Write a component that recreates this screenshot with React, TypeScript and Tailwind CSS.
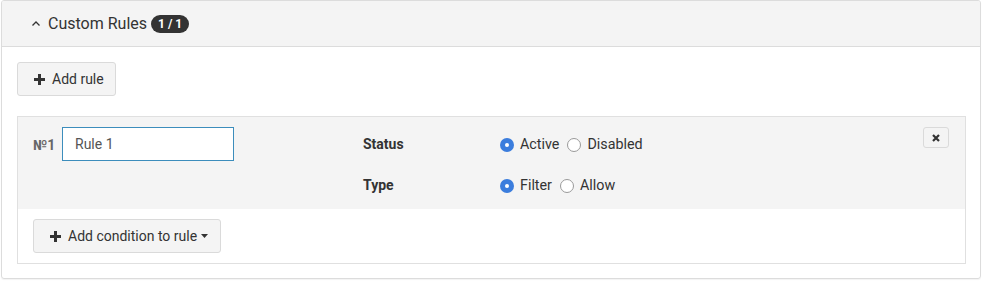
import React from "react";

function Radio({ checked, label }: { checked: boolean; label: string }) {
  return (
    <label className="flex items-center gap-[6px]">
      {checked ? (
        <span className="w-[14px] h-[14px] rounded-full bg-[#3b7ddd] flex items-center justify-center">
          <span className="w-[4px] h-[4px] rounded-full bg-white" />
        </span>
      ) : (
        <span className="w-[14px] h-[14px] rounded-full border border-[#9a9a9a] bg-white" />
      )}
      <span className="text-[14.3px] text-[#333]">{label}</span>
    </label>
  );
}

function Plus() {
  return (
    <svg width="11" height="11" viewBox="0 0 11 11">
      <path d="M4 0h3v4h4v3H7v4H4V7H0V4h4z" fill="#333" />
    </svg>
  );
}

export default function App() {
  return (
    <div className="w-[982px] h-[282px] bg-white" style={{ fontFamily: "Roboto, 'Liberation Sans', sans-serif" }}>
      <div className="ml-[1px] w-[980px] h-[279px] border border-[#dcdcdc] rounded-[3px] overflow-hidden shadow-[0_1px_1px_rgba(0,0,0,0.05)]">
        <div className="h-[46px] bg-[#f4f4f4] border-b border-[#dcdcdc] flex items-center pl-[29px]">
          <svg width="10" height="7" viewBox="0 0 10 7" className="mr-[7px] mt-[-1px]">
            <path d="M1.5 5.5 L5 2 L8.5 5.5" stroke="#333" strokeWidth="1.3" fill="none" />
          </svg>
          <span className="text-[16px] text-[#333]">Custom Rules</span>
          <span className="ml-[4px] h-[18px] px-[7px] rounded-full bg-[#333] text-white text-[12px] font-bold flex items-center leading-none">1 / 1</span>
        </div>
        <div className="pl-[15px] pt-[15px]">
          <button className="h-[34px] w-[99px] border border-[#dadada] rounded-[3px] bg-[#f4f4f4] flex items-center pl-[16px] gap-[7px] text-[14px] text-[#333]">
            <Plus />
            <span>Add rule</span>
          </button>
          <div className="mt-[20px] w-[949px] border border-[#e0e0e0]">
            <div className="bg-[#f4f4f4] h-[92px] flex pt-[10px] pl-[15px] pr-[16px]">
              <div className="flex items-start">
                <span className="text-[14px] font-bold text-[#666] mt-[8px] w-[29px]">№1</span>
                <div className="w-[172px] h-[34px] border border-[#3c8dbc] bg-white flex items-center pl-[12px] text-[14px] text-[#555]">Rule 1</div>
              </div>
              <div className="ml-[129px] flex flex-col">
                <div className="h-[34px] flex items-center">
                  <span className="w-[137px] text-[14px] font-bold text-[#333]">Status</span>
                  <div className="flex items-center gap-[8px] mt-[2px]">
                    <Radio checked label="Active" />
                    <Radio checked={false} label="Disabled" />
                  </div>
                </div>
                <div className="h-[34px] mt-[7px] flex items-center">
                  <span className="w-[137px] text-[14px] font-bold text-[#333]">Type</span>
                  <div className="flex items-center gap-[8px] mt-[2px]">
                    <Radio checked label="Filter" />
                    <Radio checked={false} label="Allow" />
                  </div>
                </div>
              </div>
              <div className="ml-auto">
                <button className="w-[26px] h-[21px] border border-[#dadada] rounded-[3px] bg-[#f4f4f4] flex items-center justify-center">
                  <svg width="8" height="8" viewBox="0 0 8 8">
                    <path d="M1 1L7 7M7 1L1 7" stroke="#333" strokeWidth="2.2" />
                  </svg>
                </button>
              </div>
            </div>
            <div className="h-[54px] pl-[15px] pt-[10px]">
              <button className="h-[34px] w-[188px] border border-[#dadada] rounded-[3px] bg-[#f4f4f4] flex items-center pl-[16px] gap-[7px] text-[14px] text-[#333]">
                <Plus />
                <span>Add condition to rule</span>
                <svg width="7" height="4" viewBox="0 0 7 4" className="ml-[-3px]">
                  <path d="M0 0h7L3.5 4z" fill="#333" />
                </svg>
              </button>
            </div>
          </div>
        </div>
      </div>
    </div>
  );
}
